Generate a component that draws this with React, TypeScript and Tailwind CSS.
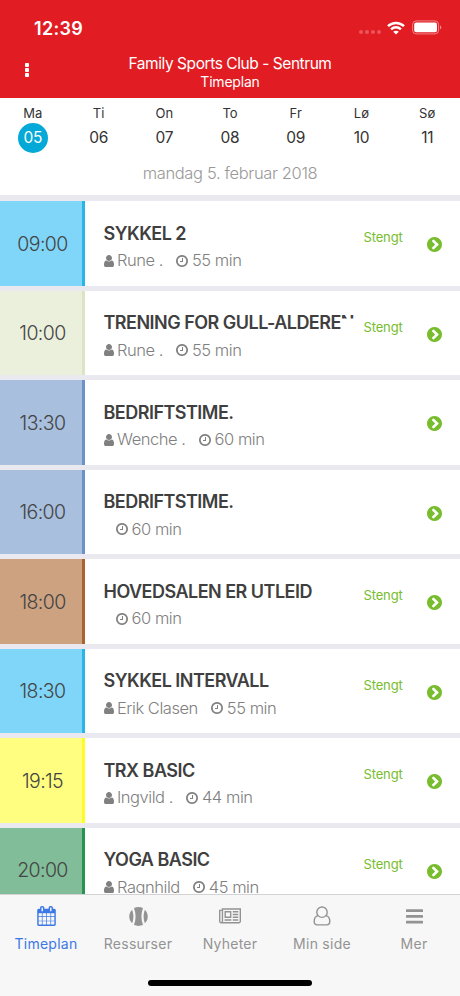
import { clsx } from 'clsx';
import type { ReactNode } from 'react';

const days = [
  { name: 'Ma', date: '05' },
  { name: 'Ti', date: '06' },
  { name: 'On', date: '07' },
  { name: 'To', date: '08' },
  { name: 'Fr', date: '09' },
  { name: 'Lø', date: '10' },
  { name: 'Sø', date: '11' },
];

const classes = [
  { time: '09:00', title: 'SYKKEL 2', trainer: 'Rune .', minutes: 55, closed: true, color: 'bg-[#80d6f8] border-[#29b4ea]' },
  { time: '10:00', title: 'TRENING FOR GULL-ALDERE', cutLetter: 'N', trainer: 'Rune .', minutes: 55, closed: true, color: 'bg-[#ebf0dc] border-[#dce5c3]' },
  { time: '13:30', title: 'BEDRIFTSTIME.', trainer: 'Wenche .', minutes: 60, closed: false, color: 'bg-[#a8bfde] border-[#6d92cb]' },
  { time: '16:00', title: 'BEDRIFTSTIME.', trainer: '', minutes: 60, closed: false, color: 'bg-[#a8bfde] border-[#6d92cb]' },
  { time: '18:00', title: 'HOVEDSALEN ER UTLEID', trainer: '', minutes: 60, closed: true, color: 'bg-[#cca281] border-[#a9642f]' },
  { time: '18:30', title: 'SYKKEL INTERVALL', trainer: 'Erik Clasen', minutes: 55, closed: true, color: 'bg-[#80d6f8] border-[#29b4ea]' },
  { time: '19:15', title: 'TRX BASIC', trainer: 'Ingvild .', minutes: 44, closed: true, color: 'bg-[#fffe80] border-[#fffb25]' },
  { time: '20:00', title: 'YOGA BASIC', trainer: 'Ragnhild', minutes: 45, closed: true, color: 'bg-[#82bd99] border-[#28934f]' },
];

function UserIcon() {
  return (
    <svg viewBox="256 128 1280 1536" className="w-[10px] h-[12px] shrink-0" fill="currentColor">
      <path d="M1536 1399q0 109-62.5 187t-150.5 78h-854q-88 0-150.5-78t-62.5-187q0-85 8.5-160.5t31.5-152 58.5-131 94-89 134.5-34.5q131 128 313 128t313-128q76 0 134.5 34.5t94 89 58.5 131 31.5 152 8.5 160.5zm-256-887q0 159-112.5 271.5t-271.5 112.5-271.5-112.5-112.5-271.5 112.5-271.5 271.5-112.5 271.5 112.5 112.5 271.5z" />
    </svg>
  );
}

function ClockIcon() {
  return (
    <svg viewBox="128 128 1536 1536" className="size-[12px] shrink-0" fill="currentColor">
      <path d="M1024 544v448q0 14-9 23t-23 9h-320q-14 0-23-9t-9-23v-64q0-14 9-23t23-9h224v-352q0-14 9-23t23-9h64q14 0 23 9t9 23zm416 352q0-148-73-273t-198-198-273-73-273 73-198 198-73 273 73 273 198 198 273 73 273-73 198-198 73-273zm224 0q0 209-103 385.5t-279.5 279.5-385.5 103-385.5-103-279.5-279.5-103-385.5 103-385.5 279.5-279.5 385.5-103 385.5 103 279.5 279.5 103 385.5z" />
    </svg>
  );
}

function ChevronCircleIcon() {
  return (
    <svg viewBox="128 128 1536 1536" className="size-[15px] shrink-0" fill="currentColor">
      <path d="M845 1395l454-454q19-19 19-45t-19-45l-454-454q-19-19-45-19t-45 19l-102 102q-19 19-19 45t19 45l307 307-307 307q-19 19-19 45t19 45l102 102q19 19 45 19t45-19zm819-499q0 209-103 385.5t-279.5 279.5-385.5 103-385.5-103-279.5-279.5-103-385.5 103-385.5 279.5-279.5 385.5-103 385.5 103 279.5 279.5 103 385.5z" />
    </svg>
  );
}

function CalendarIcon() {
  return (
    <svg viewBox="64 0 1664 1792" className="w-[19px] h-[20px]" fill="currentColor">
      <path d="M192 1664h288v-288h-288v288zm352 0h320v-288h-320v288zm-352-352h288v-320h-288v320zm352 0h320v-320h-320v320zm-352-384h288v-288h-288v288zm736 736h320v-288h-320v288zm-384-736h320v-288h-320v288zm768 736h288v-288h-288v288zm-384-352h320v-320h-320v320zm-352-864v-288q0-13-9.5-22.5t-22.5-9.5h-64q-13 0-22.5 9.5t-9.5 22.5v288q0 13 9.5 22.5t22.5 9.5h64q13 0 22.5-9.5t9.5-22.5zm736 864h288v-320h-288v320zm-384-384h320v-288h-320v288zm384 0h288v-288h-288v288zm32-480v-288q0-13-9.5-22.5t-22.5-9.5h-64q-13 0-22.5 9.5t-9.5 22.5v288q0 13 9.5 22.5t22.5 9.5h64q13 0 22.5-9.5t9.5-22.5zm384-64v1280q0 52-38 90t-90 38h-1408q-52 0-90-38t-38-90v-1280q0-52 38-90t90-38h128v-96q0-66 47-113t113-47h64q66 0 113 47t47 113v96h384v-96q0-66 47-113t113-47h64q66 0 113 47t47 113v96h128q52 0 90 38t38 90z" />
    </svg>
  );
}

function BallIcon() {
  return (
    <svg viewBox="0 0 19 19" className="size-[19px]" fill="currentColor">
      <path d="M5 .9Q9.5-.7 14 .9C11.9 6.6 11.9 12.4 14 18.1Q9.5 19.7 5 18.1C7.1 12.4 7.1 6.6 5 .9Z" />
      <path d="M3.2 2.7C4.8 7.2 4.8 11.8 3.2 16.3C-.7 12.8-.7 6.2 3.2 2.7Z" />
      <path d="M15.8 2.7C14.2 7.2 14.2 11.8 15.8 16.3C19.7 12.8 19.7 6.2 15.8 2.7Z" />
    </svg>
  );
}

function NewspaperIcon() {
  return (
    <svg viewBox="0 128 2048 1536" className="w-[22px] h-[17px]" fill="currentColor">
      <path d="M1024 512h-384v384h384v-384zm128 640v128h-640v-128h640zm0-768v640h-640v-640h640zm640 768v128h-512v-128h512zm0-256v128h-512v-128h512zm0-256v128h-512v-128h512zm0-256v128h-512v-128h512zm-1536 960v-960h-128v960q0 26 19 45t45 19 45-19 19-45zm1664 0v-1088h-1536v1088q0 33-11 64h1483q26 0 45-19t19-45zm128-1216v1216q0 80-56 136t-136 56h-1664q-80 0-136-56t-56-136v-1088h256v-128h1792z" />
    </svg>
  );
}

function PersonIcon() {
  return (
    <svg viewBox="0 0 18 20" className="w-[18px] h-[20px]" fill="none" stroke="currentColor" strokeWidth="1.4">
      <circle cx="9" cy="6.2" r="5.2" />
      <path d="M5.2 9.6C2.2 10 1.2 12.7 1.2 15.6C1.2 17.7 2.5 18.9 4.2 18.9H13.8C15.5 18.9 16.8 17.7 16.8 15.6C16.8 12.7 15.8 10 12.8 9.6" />
    </svg>
  );
}

function BarsIcon() {
  return (
    <svg viewBox="0 0 17 15" className="w-[17px] h-[15px]" fill="currentColor">
      <rect y="0.2" width="17" height="2.8" rx="0.6" />
      <rect y="6" width="17" height="2.8" rx="0.6" />
      <rect y="11.8" width="17" height="2.8" rx="0.6" />
    </svg>
  );
}

const tabs: { label: string; icon: ReactNode; active?: boolean }[] = [
  { label: 'Timeplan', icon: <CalendarIcon />, active: true },
  { label: 'Ressurser', icon: <BallIcon /> },
  { label: 'Nyheter', icon: <NewspaperIcon /> },
  { label: 'Min side', icon: <PersonIcon /> },
  { label: 'Mer', icon: <BarsIcon /> },
];

function StatusBar() {
  return (
    <div className="flex h-[50px] items-start justify-between pl-[34px] pr-[18px] pt-[17px]">
      <span className="text-[18px] leading-6 font-semibold tracking-[0.3px]">12:39</span>
      <div className="flex items-center pt-[3px]">
        <div className="mr-[6px] mt-[9px] flex gap-[2px]">
          {[0, 1, 2, 3].map((dot) => (
            <span key={dot} className="size-[4px] rounded-full bg-white/25" />
          ))}
        </div>
        <svg viewBox="0 0 18 14" className="mr-[7px] w-[18px] h-[14px]" fill="none" stroke="white" strokeWidth="2.5">
          <path d="M1 5.2C5.5 .8 12.5 .8 17 5.2" />
          <path d="M4.1 8.3C6.9 5.6 11.1 5.6 13.9 8.3" />
          <path d="M9 13.6L6.2 10.8C7.8 9.4 10.2 9.4 11.8 10.8Z" fill="white" stroke="none" />
        </svg>
        <svg viewBox="0 0 30 15" className="w-[30px] h-[15px]">
          <rect x="0.6" y="0.9" width="26" height="13" rx="3.6" fill="none" stroke="white" strokeOpacity="0.45" />
          <rect x="2.2" y="2.5" width="22.8" height="9.8" rx="2" fill="white" />
          <path d="M28 5.3Q30.6 7.4 28 9.5Z" fill="white" fillOpacity="0.5" />
        </svg>
      </div>
    </div>
  );
}

function Header() {
  return (
    <header className="h-[98px] shrink-0 bg-[#e11d23] text-white">
      <StatusBar />
      <div className="grid grid-cols-[54px_1fr_54px] items-start">
        <div className="flex flex-col items-center gap-[1px] pt-[13px]">
          {[0, 1, 2].map((dot) => (
            <span key={dot} className="size-[4px] rounded-[1px] bg-white" />
          ))}
        </div>
        <div className="flex flex-col items-center pt-[4px]">
          <h1 className="text-[15.5px] leading-[19px] font-[370] tracking-[-0.44px]">Family Sports Club - Sentrum</h1>
          <p className="text-[14px] leading-[17px] font-[370] tracking-[-0.2px]">Timeplan</p>
        </div>
      </div>
    </header>
  );
}

function WeekPicker() {
  return (
    <section className="h-[97px] shrink-0 bg-white">
      <div className="grid grid-cols-7">
        {days.map((day, index) => (
          <div key={day.date} className="flex flex-col items-center pt-[6px] text-[#333]">
            <span className="text-[13px] leading-[18px]">{day.name}</span>
            <span
              className={clsx(
                'mt-px flex size-[30px] items-center justify-center rounded-full text-[15.5px] leading-[30px] font-[370] tracking-[-0.3px]',
                index === 0 && 'bg-[#04a9d8] text-white',
              )}
            >
              {day.date}
            </span>
          </div>
        ))}
      </div>
      <p className="mt-[9px] text-center text-[16.5px] leading-[22px] tracking-[-0.35px] font-[350] text-[#999]">
        mandag 5. februar 2018
      </p>
    </section>
  );
}

function ClassRow({ item }: { item: (typeof classes)[number] }) {
  return (
    <li className="flex h-[84.5px] shrink-0 bg-white">
      <div
        className={clsx(
          'flex w-[85px] shrink-0 items-center justify-center border-r-[3px] pt-[2px] pl-[3px] text-[19.5px] tracking-[-0.6px] font-[360] text-[#444]',
          item.color,
        )}
      >
        {item.time}
      </div>
      <div className="w-[268.5px] shrink-0 pt-[20.5px] pl-[18.5px]">
        <h2 className="h-[24px] text-[18px] leading-[24px] font-semibold tracking-[-0.52px] whitespace-nowrap text-[#3f3f3f]">
          {item.title}
          {/* the letter that runs into the status label only keeps its top edge */}
          {item.cutLetter && <span className="inline-block [clip-path:inset(0_0_69%_0)]">{item.cutLetter}</span>}
        </h2>
        <div className="mt-[3.5px] flex h-[23px] items-center text-[16.5px] leading-[23px] tracking-[-0.46px] font-[350] whitespace-nowrap text-[#808080]">
          {item.trainer && (
            <>
              <UserIcon />
              <span className="mr-[13px] ml-[3.5px]">{item.trainer}</span>
            </>
          )}
          <span className={clsx('flex items-center gap-[4px]', !item.trainer && 'ml-[12px]')}>
            <ClockIcon />
            {item.minutes} min
          </span>
        </div>
      </div>
      <div className="w-[73px] pt-[26px] pl-[10px] text-[13px] leading-[20px] tracking-[-0.15px] text-[#78bd2e]">
        {item.closed && 'Stengt'}
      </div>
      <div className="pt-[36px] text-[#78bd2e]">
        <ChevronCircleIcon />
      </div>
    </li>
  );
}

function TabBar() {
  return (
    <nav className="h-[102px] shrink-0 border-t border-[#d3d3d5] bg-[#f7f7f7]">
      <div className="grid grid-cols-5">
        {tabs.map((tab) => (
          <div
            key={tab.label}
            className={clsx('flex flex-col items-center pt-[10px]', tab.active ? 'text-[#3c78e6]' : 'text-[#939393]')}
          >
            <div className="flex h-[23px] items-center pb-px">{tab.icon}</div>
            <span className="mt-[6px] text-[14px] leading-[20px] tracking-[0.25px]">{tab.label}</span>
          </div>
        ))}
      </div>
      <div className="mx-auto mt-[26px] h-[6px] w-[164px] rounded-full bg-black" />
    </nav>
  );
}

export default function App() {
  return (
    <div className="flex h-[996px] w-[460px] flex-col overflow-hidden bg-white font-['Inter','Liberation_Sans',sans-serif]">
      <Header />
      <WeekPicker />
      <ul className="flex min-h-0 flex-1 flex-col gap-[5px] overflow-hidden bg-[#e9e9ef] pt-[6px]">
        {classes.map((item) => (
          <ClassRow key={item.time} item={item} />
        ))}
      </ul>
      <TabBar />
    </div>
  );
}
